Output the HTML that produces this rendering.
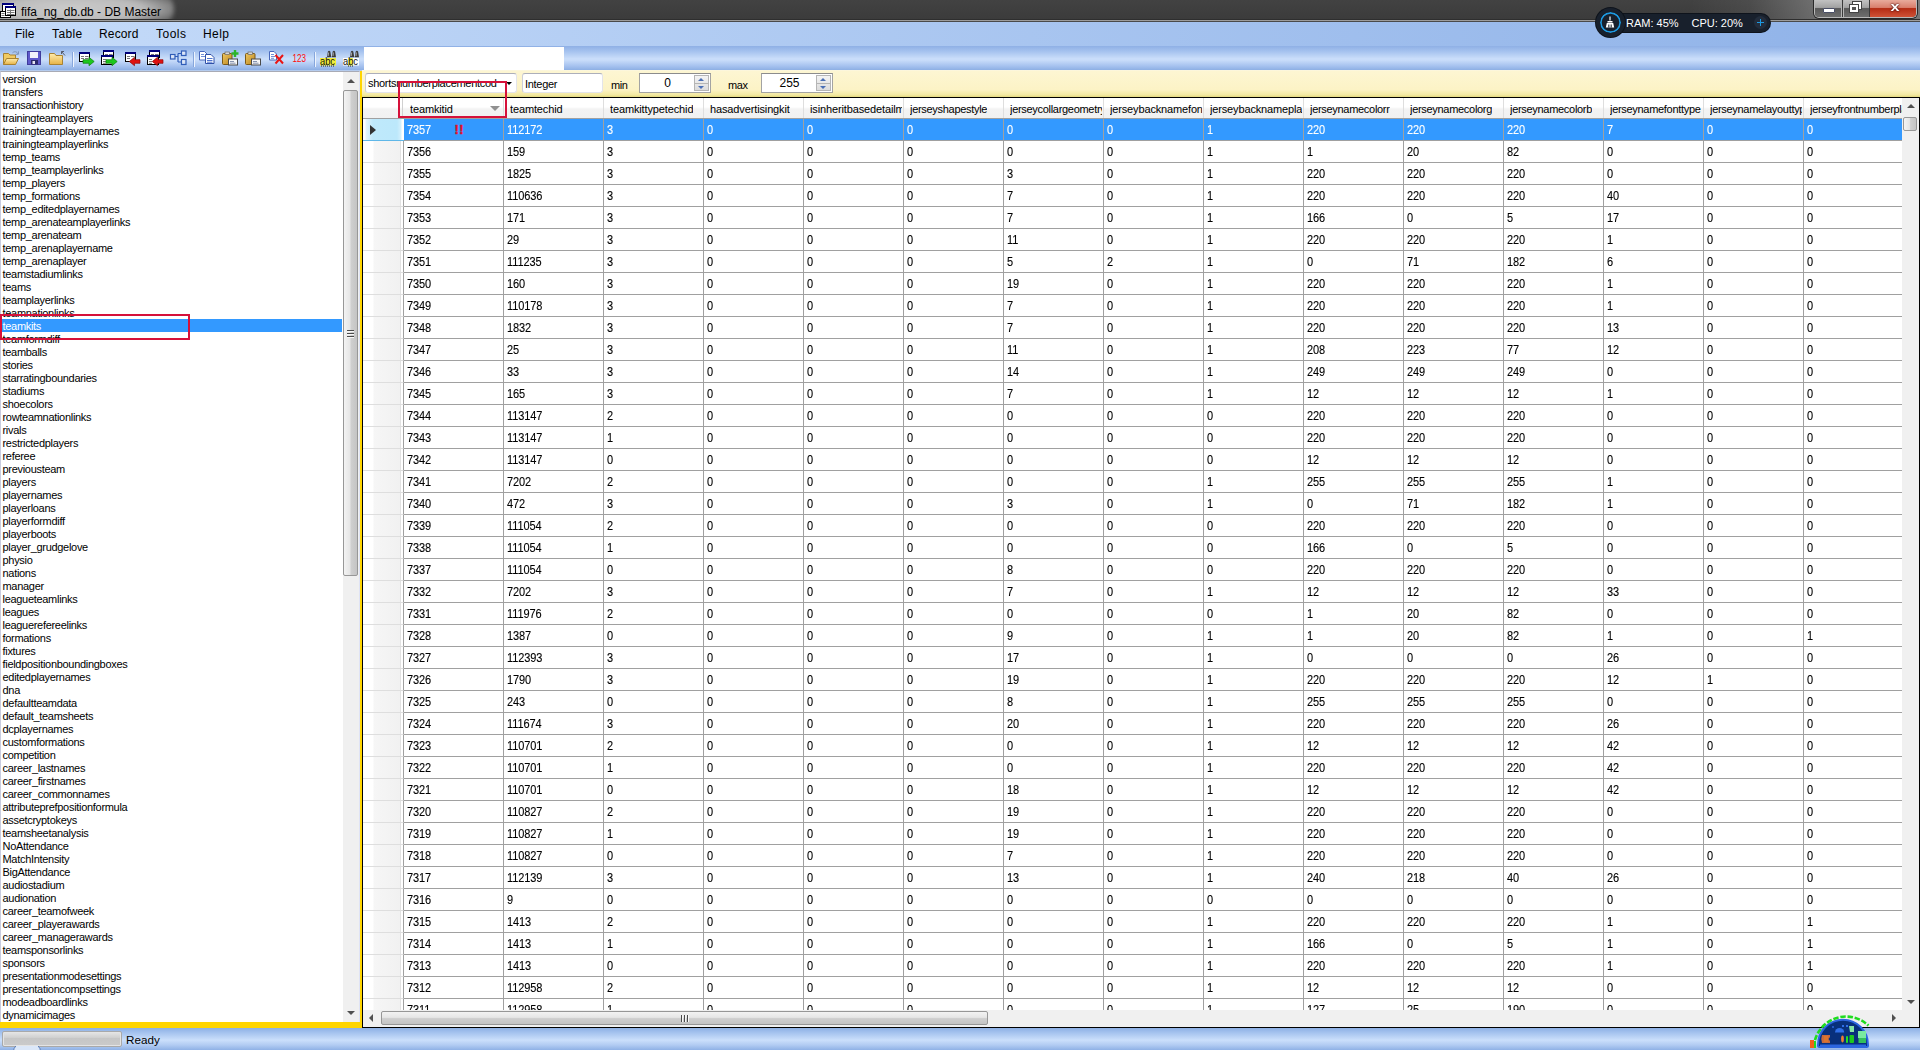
<!DOCTYPE html>
<html lang="en"><head><meta charset="utf-8"><title>fifa_ng_db.db - DB Master</title>
<style>
html,body{margin:0;padding:0}
body{width:1920px;height:1050px;overflow:hidden;position:relative;background:#c3d9f7;font-family:"Liberation Sans",sans-serif;font-size:11px;color:#000}
div,span,i,b,svg{position:absolute;box-sizing:border-box}
i,b{display:block;font-style:normal;font-weight:normal}
/* title */
#title{left:0;top:0;width:1920px;height:20px;background:linear-gradient(90deg,rgba(255,255,255,0) 1690px,rgba(255,255,255,.06) 1750px,rgba(255,255,255,.24) 1814px,rgba(255,255,255,.3) 1920px),linear-gradient(#424242,#3b3b3b)}
#glow{left:-34px;top:-9px;width:208px;height:36px;border-radius:18px;background:radial-gradient(ellipse at center,rgba(212,212,212,.95) 0%,rgba(200,200,200,.9) 50%,rgba(150,150,150,.5) 78%,rgba(60,60,60,0) 100%);filter:blur(2px)}
#appicon{left:0;top:2px}
#ttext{left:21px;top:3.500px;font-size:12px;line-height:16px;white-space:nowrap;color:#000}
#tline1{left:0;top:19px;width:1920px;height:1px;background:#2e2e2e}
#tline2{left:0;top:20px;width:1920px;height:1px;background:#9c9c9c}
#tline3{left:0;top:21px;width:1920px;height:1px;background:#4a4a4a}
#winbtns{left:1814px;top:-1px;width:103px;height:19px;border:1px solid #b9b9b9;border-top:none;border-radius:0 0 5px 5px;background:#555;overflow:hidden;box-shadow:0 0 0 1px #2a2a2a}
.wb{top:0;height:18px}
.wb.min{left:0;width:28px;background:linear-gradient(#c6c6c6 0,#a2a2a2 47%,#5a5a5a 53%,#6e6e6e 100%);border-right:1px solid #3a3a3a;box-shadow:inset -1px 0 0 #b5b5b5}
.wb.min i{left:8px;top:9px;width:12px;height:5px;background:#fff;border:1px solid #4a4f66;border-radius:1px}
.wb.max{left:28px;width:27px;background:linear-gradient(#c6c6c6 0,#a2a2a2 47%,#5a5a5a 53%,#6e6e6e 100%);border-right:1px solid #3a3a3a;box-shadow:inset 1px 0 0 #b5b5b5}
.wb.max i{left:10px;top:3px;width:8px;height:7px;border:2px solid #fff;outline:1px solid #444}
.wb.max b{left:7px;top:6px;width:8px;height:7px;border:2px solid #fff;background:#555;outline:1px solid #444}
.wb.cls{left:55px;width:46px;background:linear-gradient(#eab0a2 0,#d97f6d 47%,#b42c14 53%,#cf5236 100%)}
.wb.cls span{left:0;top:-1px;width:46px;text-align:center;font-weight:bold;font-size:12px;line-height:18px;color:#fff;text-shadow:0 0 2px #400,0 0 1px #400;transform:scaleX(1.35);margin-left:2px}
/* menu */
#menu{left:0;top:22px;width:1920px;height:24px;background:linear-gradient(90deg,#c5dbf9 0,#8fb2e8 100%)}
#menu span{top:5px;font-size:12px;line-height:15px;white-space:nowrap;color:#000;margin-left:-1px}
/* toolbar */
#toolbar{left:0;top:46px;width:1920px;height:25px;background:linear-gradient(#8fb0e5 0,#a6c3ef 22%,#c9ddfa 50%,#c9ddfa 56%,#a6c2ef 80%,#8dafe4 96%,#dbe7f8 100%)}
#tbsvg{left:0;top:0}
#toolbar .sep{top:4px;width:1px;height:15px;background:#6a8ccb;box-shadow:1px 1px 0 #fff}
#tbwhite{left:364px;top:1px;width:200px;height:23px;background:#fff}
/* widget */
#widget{left:1590px;top:5px;width:185px;height:36px}
#wpill{left:8px;top:8.500px;width:172px;height:18px;border-radius:10px;background:#18202c;box-shadow:0 0 0 1px #0e131b}
#wcirc{left:6px;top:2.500px;width:29px;height:29px;border-radius:50%;background:#18202c;border:4px solid #18202c;box-shadow:inset 0 0 0 1.700px #1d9ae2,0 0 0 1px #0e131b}
#wbroom{left:14px;top:11px}
#wram,#wcpu{top:11px;font-size:11px;line-height:15px;color:#fff;white-space:nowrap}
#wram{left:36px}#wcpu{left:101.500px}
#wplus{left:164px;top:11px;width:13px;height:13px;border-radius:50%;background:#232d3c}
#wplus i{left:3px;top:6px;width:7px;height:1px;background:#1d9ae2}
#wplus b{left:6px;top:3px;width:1px;height:7px;background:#1d9ae2}
/* list */
#list{left:0;top:71px;width:343px;height:951px;background:#fff;border-left:1px solid #c9cde0;border-top:1px solid #a9abb5;overflow:hidden}
#list div{position:static;height:13px;line-height:15px;overflow:visible;padding-left:1.500px;white-space:nowrap;font-size:11px;letter-spacing:-.3px;margin-top:0}
#list div:first-child{margin-top:0}
#list div.sel{background:#3399ff;color:#fff;width:341px}
#lsb{left:343px;top:71px;width:17px;height:951px;background:#f0f0f0;border-top:1px solid #a9abb5;border-right:1px solid #dfe3f5}
.arr{width:0;height:0}
#lsb .up{left:4px;top:7px;border:4px solid transparent;border-top:none;border-bottom:4px solid #505050}
#lsb .dn{left:4px;bottom:7px;border:4px solid transparent;border-bottom:none;border-top:4px solid #505050}
#lsb .thumb{left:0;top:18px;width:15px;height:486px;border:1px solid #979797;border-radius:2px;background:linear-gradient(90deg,#f3f3f3 0,#e6e6e6 45%,#cfcfcf 55%,#c4c4c4 100%)}
#lsb .thumb i{left:3px;top:239px;width:7px;height:8px;background:repeating-linear-gradient(#4a4a4a 0,#4a4a4a 1px,#f8f8f8 1px,#f8f8f8 2px,transparent 2px,transparent 3px)}
#gold-v{left:360px;top:71px;width:2px;height:957px;background:#ffd500}
#gold-h{left:0;top:1022px;width:362px;height:6px;background:#ffd500}
/* filter panel */
#fpanel{left:362px;top:70px;width:1558px;height:27px;background:linear-gradient(#fbf7e6 0,#fdf6d2 1px,#fdf6d2 2px,#fcf3c6 72%,#f3e9a2 92%,#e3d97e 100%)}
.box{top:3px;height:20px;background:#fff;border:1px solid #e3e4ea;border-top-color:#adafba;border-left-color:#cdcfd8;border-radius:3px;overflow:hidden}
.box span{left:2px;top:4px;font-size:11px;line-height:13px;white-space:nowrap;letter-spacing:-.3px}
#combo{left:3px;width:152px}#combo span{top:3px}
#combo .dd{left:140px;top:8px;width:0;height:0;border:3px solid transparent;border-bottom:none;border-top:3px solid #000}
#itype{left:160px;width:81px}
.lbl{top:9px;font-size:11px;line-height:13px;letter-spacing:-.4px;margin-left:-2px}
.num{width:72px;border:1px solid #a3a3a3;border-top-color:#8c8c8c;border-radius:0}
#nmin{left:277px}#nmax{left:399px}
.num span{left:0;width:55px;text-align:center;top:3px;font-size:12px;letter-spacing:0}
.spin{right:1px;top:1px;width:15px;height:16px;border:1px solid #b5b5b5;background:linear-gradient(#f4f4f4,#dcdcdc)}
.spin::after{content:"";position:absolute;left:0;top:7px;width:13px;height:1px;background:#b5b5b5}
.spin .u{left:3px;top:2px;width:0;height:0;border:3px solid transparent;border-top:none;border-bottom:3px solid #4a6fb5}
.spin .d{left:3px;top:10px;width:0;height:0;border:3px solid transparent;border-bottom:none;border-top:3px solid #4a6fb5}
/* grid */
#grid{left:362px;top:97px;width:1558px;height:931px;border:1px solid #000;background:#fff;overflow:hidden}
#ghead{left:0;top:0;width:1541px;height:21px;background:linear-gradient(#fff 0,#fff 45%,#f3f3f3 55%,#f1f1f1 100%);border-bottom:1px solid #a0a0a0}
#ghead .rh0{left:0;top:0;width:40px;height:20px;border-right:1px solid #d0d0d0}
.hc{top:0;width:100px;height:20px;overflow:hidden;border-right:1px solid #dedede}
.hc span{left:6px;top:5px;line-height:13px;white-space:nowrap;letter-spacing:-.13px;max-width:92px;overflow:hidden}
.hc .sort{left:86px;top:8px;width:0;height:0;border:5px solid transparent;border-bottom:none;border-top:5px solid #909090}
#gbody{left:0;top:21px;width:1541px;height:891px;overflow:hidden}
.row{left:0;width:1541px;height:22px;border-bottom:1px solid #a0a0a0}
.rh{left:0;top:0;width:41px;height:22px;background:linear-gradient(90deg,#fff 0,#fff 10px,#f6f6f6 11px,#f1f1f1 37px,#e2e2e2 37px,#e2e2e2 38px,#fff 38px,#fff 40px);border-right:1px solid #a0a0a0;border-bottom:1px solid #dedede}
.c{top:0;width:100px;height:21px;border-right:1px solid #a0a0a0;padding:5px 0 0 3px;line-height:13px;white-space:nowrap;overflow:hidden;letter-spacing:-.1px}
.c span{position:static;display:inline-block;transform:scaleY(1.125);transform-origin:0 11px;-webkit-text-stroke:.1px currentColor}
.row.sel .c{background:#3399ff;color:#fff}
.row.sel .rh{background:linear-gradient(90deg,#fff 0,#fff 2px,#e4f5fd 3px,#bfe9fb 10px,#bce8fb 34px,#d5f0fc 38px,#fff 39px,#fff 41px);border-bottom:1px solid #5fb7e8;border-right:none}
.cur{left:7px;top:6px;width:0;height:0;border:5px solid transparent;border-right:none;border-left:6px solid #333}
.err{left:50.500px;top:4px;color:#e3122b;font-weight:bold;font-size:13px;line-height:13px;letter-spacing:.3px;-webkit-text-stroke:.5px #e3122b}
#gvsb{left:1539px;top:0;width:17px;height:912px;background:#f0f0f0}
#gvsb .up{left:5px;top:6px;border:4px solid transparent;border-top:none;border-bottom:4px solid #505050}
#gvsb .dn{left:5px;bottom:6px;border:4px solid transparent;border-bottom:none;border-top:4px solid #505050}
#gvsb .thumb{left:1px;top:19px;width:14px;height:14px;border:1px solid #979797;border-radius:2px;background:linear-gradient(90deg,#f3f3f3 0,#e6e6e6 45%,#cfcfcf 55%,#c4c4c4 100%)}
#ghsb{left:0;top:912px;width:1540px;height:17px;background:#f0f0f0}
#ghsb .lf{left:6px;top:4px;border:4px solid transparent;border-left:none;border-right:4px solid #505050}
#ghsb .rt{right:7px;top:4px;border:4px solid transparent;border-right:none;border-left:4px solid #505050}
#ghsb .thumb{left:18px;top:1px;width:607px;height:14px;border:1px solid #979797;border-radius:2px;background:linear-gradient(#f3f3f3 0,#e6e6e6 45%,#cfcfcf 55%,#c4c4c4 100%)}
#ghsb .thumb i{left:299px;top:3px;width:8px;height:7px;background:repeating-linear-gradient(90deg,#4a4a4a 0,#4a4a4a 1px,#f8f8f8 1px,#f8f8f8 2px,transparent 2px,transparent 3px)}
#gcorner{left:1540px;top:912px;width:16px;height:17px;background:#f0f0f0}
.anno{border:2px solid #d6113a;z-index:20}
/* status */
#status{left:0;top:1028px;width:1920px;height:22px;background:linear-gradient(#8db0e5 0,#a9c6f0 25%,#cbdffb 55%,#b1cbf2 78%,#8fb1e6 100%)}
#prog{left:2px;top:3px;width:120px;height:16px;border:1px solid #a9a9a9;border-radius:2px;background:linear-gradient(#e6e6e6,#d0d0d0 40%,#c6c6c6 45%,#cacaca);box-shadow:inset 0 0 0 1px #e4e4e4}
#status span{left:126px;top:4px;font-size:11.700px;line-height:15px}
#orb{left:12px;top:18px}
#gadget{left:1808px;top:1012px;z-index:30}

</style></head>
<body>
<div id="title"><div id="glow"></div><svg id="appicon" width="18" height="18" viewBox="0 0 18 18"><rect x="2.500" y="1.500" width="11" height="9" fill="#fff" stroke="#000"/><rect x="2" y="1" width="12" height="2" fill="#00007b"/><rect x="0.500" y="9.500" width="10" height="6" fill="#fff" stroke="#000"/><path d="M1.500 11.500h3M1.500 13.500h3" stroke="#777"/><rect x="5.500" y="4.500" width="10" height="9" fill="#fff" stroke="#000"/><rect x="5" y="4" width="11" height="2" fill="#00007b"/><path d="M7 8.500h7.500M7 10.500h7.500M7 12.500h7.500M10.500 7.500v5.500" stroke="#777" fill="none"/></svg><span id="ttext">fifa_ng_db.db - DB Master</span><div id="winbtns"><div class="wb min"><i></i></div><div class="wb max"><i></i><b></b></div><div class="wb cls"><span>x</span></div></div></div>
<div id="tline1"></div><div id="tline2"></div><div id="tline3"></div>
<div id="menu"><span style="left:16px;letter-spacing:0px">File</span><span style="left:53px;letter-spacing:0.4px">Table</span><span style="left:100px;letter-spacing:0.15px">Record</span><span style="left:157px;letter-spacing:0.5px">Tools</span><span style="left:204px;letter-spacing:0.4px">Help</span></div>
<div id="toolbar"><svg id="tbsvg" width="364" height="25" viewBox="0 46 364 25">
<defs>
<linearGradient id="gf" x1="0" y1="0" x2="0" y2="1"><stop offset="0" stop-color="#ffedae"/><stop offset="1" stop-color="#e6b245"/></linearGradient>
<linearGradient id="gw" x1="0" y1="0" x2="1" y2="1"><stop offset="0" stop-color="#fff"/><stop offset="1" stop-color="#b9cdf0"/></linearGradient>
<linearGradient id="gc" x1="0" y1="0" x2="1" y2="1"><stop offset="0" stop-color="#f0c860"/><stop offset="1" stop-color="#b98420"/></linearGradient>
</defs>
<!-- open -->
<path d="M3.500 64.500V53.500H8.500L10 55H15.500V58" fill="#f1cb63" stroke="#a98232"/>
<path d="M3.500 64.500L6.500 58.500H18.500L15.500 64.500Z" fill="url(#gf)" stroke="#a98232"/>
<path d="M12.500 52.800C14.500 51 17 51.500 18 54M18.400 51.300V54.300H15.500" fill="none" stroke="#7d93b8"/>
<!-- save -->
<rect x="27.500" y="51.500" width="13" height="13" fill="#5e59cb" stroke="#3f3b9c"/>
<rect x="30" y="52" width="8" height="6" fill="#f2f3fb"/>
<rect x="31" y="60" width="7" height="4.500" fill="#2c2a6c"/>
<rect x="32.500" y="61" width="2.500" height="3" fill="#e4e4f0"/>
<!-- folder up -->
<path d="M49.500 64.500V53.500H54.500L56 55.500H62.500V64.500Z" fill="url(#gf)" stroke="#a98232"/>
<path d="M61.500 51.500L65 55.500M61.500 54V51.500H64" fill="none" stroke="#555a6a"/>
<path d="M72.500 52V67" stroke="#86a6dc"/><path d="M73.500 52V67" stroke="#eef4fd"/>
<!-- export one -->
<rect x="79.500" y="52.500" width="10" height="9" fill="#fff" stroke="#000"/><rect x="79" y="52" width="11" height="2" fill="#00007b"/>
<path d="M81 56.500h3M85 56.500h3.500M81 58.500h3M85 58.500h3.500" stroke="#777"/>
<path d="M83 59.700H89V57.300L94.200 61.500L89 65.700V63.300H83Z" fill="#1cc81c" stroke="#0c7c0c" stroke-width=".7"/>
<!-- export all -->
<rect x="103.500" y="50.500" width="10" height="7" fill="#fff" stroke="#000"/><rect x="103" y="50" width="11" height="2" fill="#00007b"/>
<path d="M105 54.500h3M109 54.500h3.500" stroke="#777"/>
<rect x="101.500" y="55.500" width="11" height="9" fill="#fff" stroke="#000"/><rect x="101" y="55" width="12" height="2" fill="#00007b"/>
<path d="M103 59.500h3M103 61.500h3M103 63.300h3" stroke="#777"/>
<path d="M106 59.700H112V57.300L117.200 61.500L112 65.700V63.300H106Z" fill="#1cc81c" stroke="#0c7c0c" stroke-width=".7"/>
<!-- import one -->
<rect x="125.500" y="52.500" width="10" height="9" fill="#fff" stroke="#000"/><rect x="125" y="52" width="11" height="2" fill="#00007b"/>
<path d="M127 56.500h3M131 56.500h3.500M127 58.500h3" stroke="#777"/>
<path d="M140 59.700H134.500V57.300L129.300 61.500L134.500 65.700V63.300H140Z" fill="#e01212" stroke="#8c0808" stroke-width=".7"/>
<!-- import all -->
<rect x="149.500" y="50.500" width="10" height="7" fill="#fff" stroke="#000"/><rect x="149" y="50" width="11" height="2" fill="#00007b"/>
<path d="M151 54.500h3M155 54.500h3.500" stroke="#777"/>
<rect x="147.500" y="55.500" width="11" height="9" fill="#fff" stroke="#000"/><rect x="147" y="55" width="12" height="2" fill="#00007b"/>
<path d="M149 59.500h3M149 61.500h3M149 63.300h3" stroke="#777"/>
<path d="M163 59.700H157.500V57.300L152.300 61.500L157.500 65.700V63.300H163Z" fill="#e01212" stroke="#8c0808" stroke-width=".7"/>
<!-- tree -->
<path d="M175 56.500H178M178 53.500V62M178 53.500H181M178 62H181" fill="none" stroke="#2f5cb8" stroke-width="1.200"/>
<rect x="170.500" y="54.500" width="4.500" height="4.500" fill="url(#gw)" stroke="#2f5cb8" stroke-width="1.200"/>
<rect x="181.500" y="51" width="4.500" height="4.500" fill="url(#gw)" stroke="#2f5cb8" stroke-width="1.200"/>
<rect x="181.500" y="59.500" width="4.500" height="5" fill="url(#gw)" stroke="#2f5cb8" stroke-width="1.200"/>
<path d="M193.500 52V67" stroke="#86a6dc"/><path d="M194.500 52V67" stroke="#eef4fd"/>
<!-- copy -->
<path d="M199.500 51.500h5l2.500 2.500v6h-7.500z" fill="#fff" stroke="#4868bc"/><path d="M201 54.500h3M201 56.500h4.500" stroke="#6f8fd8"/>
<path d="M205.500 54.500h5.500l3 3v6h-8.500z" fill="#fff" stroke="#2f50a8"/><path d="M207 58.500h5.500M207 60.500h5.500M207 62.200h5.500" stroke="#4f74cf"/>
<!-- paste new -->
<rect x="222.500" y="53.500" width="9.500" height="11" rx="1" fill="url(#gc)" stroke="#7c5a18"/>
<rect x="225" y="52" width="4.500" height="2.500" fill="#d8d8d8" stroke="#666" stroke-width=".7"/>
<rect x="228.500" y="59" width="9" height="6" fill="#f6f6f6" stroke="#4a4a4a"/><path d="M230 61.500h4M230 63.200h5.500" stroke="#8894b0"/>
<path d="M235 50V57M231.500 53.500H238.500" stroke="#2cb52c" stroke-width="2.400"/>
<!-- paste -->
<rect x="245.500" y="53.500" width="9.500" height="11" rx="1" fill="url(#gc)" stroke="#7c5a18"/>
<rect x="248" y="52" width="4.500" height="2.500" fill="#d8d8d8" stroke="#666" stroke-width=".7"/>
<rect x="251.500" y="59" width="9" height="6" fill="#f6f6f6" stroke="#4a4a4a"/><path d="M253 61.500h4M253 63.200h5.500" stroke="#8894b0"/>
<!-- delete -->
<path d="M269.500 51.500h4.500l2.500 2.500v6h-7z" fill="#fff" stroke="#4868bc"/><path d="M271 54.500h3M271 56.500h4M271 58.300h3" stroke="#6f8fd8"/>
<path d="M275.500 55L283 63.500M283 55L275.500 63.500" stroke="#ea1414" stroke-width="2"/>
<!-- 123 -->
<text x="292.500" y="62" font-family="Liberation Sans, sans-serif" font-size="11.500" fill="#ff0a0a" textLength="13.500" lengthAdjust="spacingAndGlyphs">123</text>
<path d="M314.500 52V67" stroke="#86a6dc"/><path d="M315.500 52V67" stroke="#eef4fd"/>
<!-- find -->
<rect x="320" y="58" width="16" height="7.500" fill="#f2ee3c"/>
<text x="320" y="64.500" font-family="Liberation Sans, sans-serif" font-size="10.500" fill="#111" textLength="15" lengthAdjust="spacingAndGlyphs">abc</text>
<path d="M321 66h14" stroke="#222" stroke-dasharray="1 1"/>
<path d="M327 57.300L327.900 51.500Q329.100 49.800 330.300 51.500L331.300 57.300ZM331.700 57.300L332.700 51.500Q333.900 49.800 335.100 51.500L336 57.300Z" fill="#3c3c3c"/><path d="M328.600 52.500L328.200 56M333.400 52.500L333 56" stroke="#b4b4b4" stroke-width=".9"/>
<!-- find2 -->
<rect x="343" y="58" width="16" height="7.500" fill="#fff"/><rect x="348" y="58" width="4.800" height="7.500" fill="#f2ee3c"/>
<text x="343" y="64.500" font-family="Liberation Sans, sans-serif" font-size="10.500" fill="#111" textLength="15" lengthAdjust="spacingAndGlyphs">abc</text>
<path d="M348 66h5" stroke="#222" stroke-dasharray="1 1"/>
<path d="M350 57.300L350.900 51.500Q352.100 49.800 353.300 51.500L354.300 57.300ZM354.700 57.300L355.700 51.500Q356.900 49.800 358.100 51.500L359 57.300Z" fill="#3c3c3c"/><path d="M351.600 52.500L351.200 56M356.400 52.500L356 56" stroke="#b4b4b4" stroke-width=".9"/>
</svg>
<div id="tbwhite"></div></div>
<div id="widget"><div id="wpill"></div><div id="wcirc"></div><svg id="wbroom" width="12" height="12" viewBox="0 0 12 12"><path d="M6 0.500v4" stroke="#fff" stroke-width="1.200"/><path d="M3.500 5h5v1.500h-5z" fill="#fff"/><path d="M2.800 7h6.400l1 4.500h-8.400z" fill="#fff"/><path d="M4.500 8.500v3M6 8.500v3M7.500 8.500v3" stroke="#16202c" stroke-width="0.700"/></svg><span id="wram">RAM: 45%</span><span id="wcpu">CPU: 20%</span><div id="wplus"><i></i><b></b></div></div>
<div id="list"><div>version</div><div>transfers</div><div>transactionhistory</div><div>trainingteamplayers</div><div>trainingteamplayernames</div><div>trainingteamplayerlinks</div><div>temp_teams</div><div>temp_teamplayerlinks</div><div>temp_players</div><div>temp_formations</div><div>temp_editedplayernames</div><div>temp_arenateamplayerlinks</div><div>temp_arenateam</div><div>temp_arenaplayername</div><div>temp_arenaplayer</div><div>teamstadiumlinks</div><div>teams</div><div>teamplayerlinks</div><div>teamnationlinks</div><div class="sel">teamkits</div><div>teamformdiff</div><div>teamballs</div><div>stories</div><div>starratingboundaries</div><div>stadiums</div><div>shoecolors</div><div>rowteamnationlinks</div><div>rivals</div><div>restrictedplayers</div><div>referee</div><div>previousteam</div><div>players</div><div>playernames</div><div>playerloans</div><div>playerformdiff</div><div>playerboots</div><div>player_grudgelove</div><div>physio</div><div>nations</div><div>manager</div><div>leagueteamlinks</div><div>leagues</div><div>leaguerefereelinks</div><div>formations</div><div>fixtures</div><div>fieldpositionboundingboxes</div><div>editedplayernames</div><div>dna</div><div>defaultteamdata</div><div>default_teamsheets</div><div>dcplayernames</div><div>customformations</div><div>competition</div><div>career_lastnames</div><div>career_firstnames</div><div>career_commonnames</div><div>attributeprefpositionformula</div><div>assetcryptokeys</div><div>teamsheetanalysis</div><div>NoAttendance</div><div>MatchIntensity</div><div>BigAttendance</div><div>audiostadium</div><div>audionation</div><div>career_teamofweek</div><div>career_playerawards</div><div>career_managerawards</div><div>teamsponsorlinks</div><div>sponsors</div><div>presentationmodesettings</div><div>presentationcompsettings</div><div>modeadboardlinks</div><div>dynamicimages</div></div>
<div id="lsb"><div class="arr up"></div><div class="thumb"><i></i></div><div class="arr dn"></div></div>
<div id="gold-v"></div><div id="gold-h"></div>
<div id="fpanel"><div class="box" id="combo"><span>shortsnumberplacementcod</span><i class="dd"></i></div><div class="box" id="itype"><span>Integer</span></div><span class="lbl" style="left:251px">min</span><div class="box num" id="nmin"><span>0</span><div class="spin"><i class="u"></i><i class="d"></i></div></div><span class="lbl" style="left:368px">max</span><div class="box num" id="nmax"><span>255</span><div class="spin"><i class="u"></i><i class="d"></i></div></div></div>
<div id="grid"><div id="ghead"><div class="rh0"></div><div class="hc" style="left:41px"><span>teamkitid</span><i class="sort"></i></div><div class="hc" style="left:141px"><span>teamtechid</span></div><div class="hc" style="left:241px"><span>teamkittypetechid</span></div><div class="hc" style="left:341px"><span>hasadvertisingkit</span></div><div class="hc" style="left:441px"><span>isinheritbasedetailmap</span></div><div class="hc" style="left:541px"><span style="letter-spacing:-.3px">jerseyshapestyle</span></div><div class="hc" style="left:641px"><span style="letter-spacing:-.3px">jerseycollargeometrytype</span></div><div class="hc" style="left:741px"><span style="letter-spacing:-.15px">jerseybacknamefontcase</span></div><div class="hc" style="left:841px"><span style="letter-spacing:-.15px">jerseybacknameplacementcode</span></div><div class="hc" style="left:941px"><span style="letter-spacing:-.3px">jerseynamecolorr</span></div><div class="hc" style="left:1041px"><span style="letter-spacing:-.3px">jerseynamecolorg</span></div><div class="hc" style="left:1141px"><span style="letter-spacing:-.3px">jerseynamecolorb</span></div><div class="hc" style="left:1241px"><span style="letter-spacing:-.3px">jerseynamefonttype</span></div><div class="hc" style="left:1341px"><span style="letter-spacing:-.3px">jerseynamelayouttype</span></div><div class="hc" style="left:1441px"><span style="letter-spacing:-.3px">jerseyfrontnumberplacementcode</span></div></div><div id="gbody"><div class="row sel" style="top:0px"><div class="rh"><i class="cur"></i></div><div class="c" style="left:41px"><span>7357</span><b class="err">!!</b></div><div class="c" style="left:141px"><span>112172</span></div><div class="c" style="left:241px"><span>3</span></div><div class="c" style="left:341px"><span>0</span></div><div class="c" style="left:441px"><span>0</span></div><div class="c" style="left:541px"><span>0</span></div><div class="c" style="left:641px"><span>0</span></div><div class="c" style="left:741px"><span>0</span></div><div class="c" style="left:841px"><span>1</span></div><div class="c" style="left:941px"><span>220</span></div><div class="c" style="left:1041px"><span>220</span></div><div class="c" style="left:1141px"><span>220</span></div><div class="c" style="left:1241px"><span>7</span></div><div class="c" style="left:1341px"><span>0</span></div><div class="c" style="left:1441px"><span>0</span></div></div><div class="row" style="top:22px"><div class="rh"></div><div class="c" style="left:41px"><span>7356</span></div><div class="c" style="left:141px"><span>159</span></div><div class="c" style="left:241px"><span>3</span></div><div class="c" style="left:341px"><span>0</span></div><div class="c" style="left:441px"><span>0</span></div><div class="c" style="left:541px"><span>0</span></div><div class="c" style="left:641px"><span>0</span></div><div class="c" style="left:741px"><span>0</span></div><div class="c" style="left:841px"><span>1</span></div><div class="c" style="left:941px"><span>1</span></div><div class="c" style="left:1041px"><span>20</span></div><div class="c" style="left:1141px"><span>82</span></div><div class="c" style="left:1241px"><span>0</span></div><div class="c" style="left:1341px"><span>0</span></div><div class="c" style="left:1441px"><span>0</span></div></div><div class="row" style="top:44px"><div class="rh"></div><div class="c" style="left:41px"><span>7355</span></div><div class="c" style="left:141px"><span>1825</span></div><div class="c" style="left:241px"><span>3</span></div><div class="c" style="left:341px"><span>0</span></div><div class="c" style="left:441px"><span>0</span></div><div class="c" style="left:541px"><span>0</span></div><div class="c" style="left:641px"><span>3</span></div><div class="c" style="left:741px"><span>0</span></div><div class="c" style="left:841px"><span>1</span></div><div class="c" style="left:941px"><span>220</span></div><div class="c" style="left:1041px"><span>220</span></div><div class="c" style="left:1141px"><span>220</span></div><div class="c" style="left:1241px"><span>0</span></div><div class="c" style="left:1341px"><span>0</span></div><div class="c" style="left:1441px"><span>0</span></div></div><div class="row" style="top:66px"><div class="rh"></div><div class="c" style="left:41px"><span>7354</span></div><div class="c" style="left:141px"><span>110636</span></div><div class="c" style="left:241px"><span>3</span></div><div class="c" style="left:341px"><span>0</span></div><div class="c" style="left:441px"><span>0</span></div><div class="c" style="left:541px"><span>0</span></div><div class="c" style="left:641px"><span>7</span></div><div class="c" style="left:741px"><span>0</span></div><div class="c" style="left:841px"><span>1</span></div><div class="c" style="left:941px"><span>220</span></div><div class="c" style="left:1041px"><span>220</span></div><div class="c" style="left:1141px"><span>220</span></div><div class="c" style="left:1241px"><span>40</span></div><div class="c" style="left:1341px"><span>0</span></div><div class="c" style="left:1441px"><span>0</span></div></div><div class="row" style="top:88px"><div class="rh"></div><div class="c" style="left:41px"><span>7353</span></div><div class="c" style="left:141px"><span>171</span></div><div class="c" style="left:241px"><span>3</span></div><div class="c" style="left:341px"><span>0</span></div><div class="c" style="left:441px"><span>0</span></div><div class="c" style="left:541px"><span>0</span></div><div class="c" style="left:641px"><span>7</span></div><div class="c" style="left:741px"><span>0</span></div><div class="c" style="left:841px"><span>1</span></div><div class="c" style="left:941px"><span>166</span></div><div class="c" style="left:1041px"><span>0</span></div><div class="c" style="left:1141px"><span>5</span></div><div class="c" style="left:1241px"><span>17</span></div><div class="c" style="left:1341px"><span>0</span></div><div class="c" style="left:1441px"><span>0</span></div></div><div class="row" style="top:110px"><div class="rh"></div><div class="c" style="left:41px"><span>7352</span></div><div class="c" style="left:141px"><span>29</span></div><div class="c" style="left:241px"><span>3</span></div><div class="c" style="left:341px"><span>0</span></div><div class="c" style="left:441px"><span>0</span></div><div class="c" style="left:541px"><span>0</span></div><div class="c" style="left:641px"><span>11</span></div><div class="c" style="left:741px"><span>0</span></div><div class="c" style="left:841px"><span>1</span></div><div class="c" style="left:941px"><span>220</span></div><div class="c" style="left:1041px"><span>220</span></div><div class="c" style="left:1141px"><span>220</span></div><div class="c" style="left:1241px"><span>1</span></div><div class="c" style="left:1341px"><span>0</span></div><div class="c" style="left:1441px"><span>0</span></div></div><div class="row" style="top:132px"><div class="rh"></div><div class="c" style="left:41px"><span>7351</span></div><div class="c" style="left:141px"><span>111235</span></div><div class="c" style="left:241px"><span>3</span></div><div class="c" style="left:341px"><span>0</span></div><div class="c" style="left:441px"><span>0</span></div><div class="c" style="left:541px"><span>0</span></div><div class="c" style="left:641px"><span>5</span></div><div class="c" style="left:741px"><span>2</span></div><div class="c" style="left:841px"><span>1</span></div><div class="c" style="left:941px"><span>0</span></div><div class="c" style="left:1041px"><span>71</span></div><div class="c" style="left:1141px"><span>182</span></div><div class="c" style="left:1241px"><span>6</span></div><div class="c" style="left:1341px"><span>0</span></div><div class="c" style="left:1441px"><span>0</span></div></div><div class="row" style="top:154px"><div class="rh"></div><div class="c" style="left:41px"><span>7350</span></div><div class="c" style="left:141px"><span>160</span></div><div class="c" style="left:241px"><span>3</span></div><div class="c" style="left:341px"><span>0</span></div><div class="c" style="left:441px"><span>0</span></div><div class="c" style="left:541px"><span>0</span></div><div class="c" style="left:641px"><span>19</span></div><div class="c" style="left:741px"><span>0</span></div><div class="c" style="left:841px"><span>1</span></div><div class="c" style="left:941px"><span>220</span></div><div class="c" style="left:1041px"><span>220</span></div><div class="c" style="left:1141px"><span>220</span></div><div class="c" style="left:1241px"><span>1</span></div><div class="c" style="left:1341px"><span>0</span></div><div class="c" style="left:1441px"><span>0</span></div></div><div class="row" style="top:176px"><div class="rh"></div><div class="c" style="left:41px"><span>7349</span></div><div class="c" style="left:141px"><span>110178</span></div><div class="c" style="left:241px"><span>3</span></div><div class="c" style="left:341px"><span>0</span></div><div class="c" style="left:441px"><span>0</span></div><div class="c" style="left:541px"><span>0</span></div><div class="c" style="left:641px"><span>7</span></div><div class="c" style="left:741px"><span>0</span></div><div class="c" style="left:841px"><span>1</span></div><div class="c" style="left:941px"><span>220</span></div><div class="c" style="left:1041px"><span>220</span></div><div class="c" style="left:1141px"><span>220</span></div><div class="c" style="left:1241px"><span>1</span></div><div class="c" style="left:1341px"><span>0</span></div><div class="c" style="left:1441px"><span>0</span></div></div><div class="row" style="top:198px"><div class="rh"></div><div class="c" style="left:41px"><span>7348</span></div><div class="c" style="left:141px"><span>1832</span></div><div class="c" style="left:241px"><span>3</span></div><div class="c" style="left:341px"><span>0</span></div><div class="c" style="left:441px"><span>0</span></div><div class="c" style="left:541px"><span>0</span></div><div class="c" style="left:641px"><span>7</span></div><div class="c" style="left:741px"><span>0</span></div><div class="c" style="left:841px"><span>1</span></div><div class="c" style="left:941px"><span>220</span></div><div class="c" style="left:1041px"><span>220</span></div><div class="c" style="left:1141px"><span>220</span></div><div class="c" style="left:1241px"><span>13</span></div><div class="c" style="left:1341px"><span>0</span></div><div class="c" style="left:1441px"><span>0</span></div></div><div class="row" style="top:220px"><div class="rh"></div><div class="c" style="left:41px"><span>7347</span></div><div class="c" style="left:141px"><span>25</span></div><div class="c" style="left:241px"><span>3</span></div><div class="c" style="left:341px"><span>0</span></div><div class="c" style="left:441px"><span>0</span></div><div class="c" style="left:541px"><span>0</span></div><div class="c" style="left:641px"><span>11</span></div><div class="c" style="left:741px"><span>0</span></div><div class="c" style="left:841px"><span>1</span></div><div class="c" style="left:941px"><span>208</span></div><div class="c" style="left:1041px"><span>223</span></div><div class="c" style="left:1141px"><span>77</span></div><div class="c" style="left:1241px"><span>12</span></div><div class="c" style="left:1341px"><span>0</span></div><div class="c" style="left:1441px"><span>0</span></div></div><div class="row" style="top:242px"><div class="rh"></div><div class="c" style="left:41px"><span>7346</span></div><div class="c" style="left:141px"><span>33</span></div><div class="c" style="left:241px"><span>3</span></div><div class="c" style="left:341px"><span>0</span></div><div class="c" style="left:441px"><span>0</span></div><div class="c" style="left:541px"><span>0</span></div><div class="c" style="left:641px"><span>14</span></div><div class="c" style="left:741px"><span>0</span></div><div class="c" style="left:841px"><span>1</span></div><div class="c" style="left:941px"><span>249</span></div><div class="c" style="left:1041px"><span>249</span></div><div class="c" style="left:1141px"><span>249</span></div><div class="c" style="left:1241px"><span>0</span></div><div class="c" style="left:1341px"><span>0</span></div><div class="c" style="left:1441px"><span>0</span></div></div><div class="row" style="top:264px"><div class="rh"></div><div class="c" style="left:41px"><span>7345</span></div><div class="c" style="left:141px"><span>165</span></div><div class="c" style="left:241px"><span>3</span></div><div class="c" style="left:341px"><span>0</span></div><div class="c" style="left:441px"><span>0</span></div><div class="c" style="left:541px"><span>0</span></div><div class="c" style="left:641px"><span>7</span></div><div class="c" style="left:741px"><span>0</span></div><div class="c" style="left:841px"><span>1</span></div><div class="c" style="left:941px"><span>12</span></div><div class="c" style="left:1041px"><span>12</span></div><div class="c" style="left:1141px"><span>12</span></div><div class="c" style="left:1241px"><span>1</span></div><div class="c" style="left:1341px"><span>0</span></div><div class="c" style="left:1441px"><span>0</span></div></div><div class="row" style="top:286px"><div class="rh"></div><div class="c" style="left:41px"><span>7344</span></div><div class="c" style="left:141px"><span>113147</span></div><div class="c" style="left:241px"><span>2</span></div><div class="c" style="left:341px"><span>0</span></div><div class="c" style="left:441px"><span>0</span></div><div class="c" style="left:541px"><span>0</span></div><div class="c" style="left:641px"><span>0</span></div><div class="c" style="left:741px"><span>0</span></div><div class="c" style="left:841px"><span>0</span></div><div class="c" style="left:941px"><span>220</span></div><div class="c" style="left:1041px"><span>220</span></div><div class="c" style="left:1141px"><span>220</span></div><div class="c" style="left:1241px"><span>0</span></div><div class="c" style="left:1341px"><span>0</span></div><div class="c" style="left:1441px"><span>0</span></div></div><div class="row" style="top:308px"><div class="rh"></div><div class="c" style="left:41px"><span>7343</span></div><div class="c" style="left:141px"><span>113147</span></div><div class="c" style="left:241px"><span>1</span></div><div class="c" style="left:341px"><span>0</span></div><div class="c" style="left:441px"><span>0</span></div><div class="c" style="left:541px"><span>0</span></div><div class="c" style="left:641px"><span>0</span></div><div class="c" style="left:741px"><span>0</span></div><div class="c" style="left:841px"><span>0</span></div><div class="c" style="left:941px"><span>220</span></div><div class="c" style="left:1041px"><span>220</span></div><div class="c" style="left:1141px"><span>220</span></div><div class="c" style="left:1241px"><span>0</span></div><div class="c" style="left:1341px"><span>0</span></div><div class="c" style="left:1441px"><span>0</span></div></div><div class="row" style="top:330px"><div class="rh"></div><div class="c" style="left:41px"><span>7342</span></div><div class="c" style="left:141px"><span>113147</span></div><div class="c" style="left:241px"><span>0</span></div><div class="c" style="left:341px"><span>0</span></div><div class="c" style="left:441px"><span>0</span></div><div class="c" style="left:541px"><span>0</span></div><div class="c" style="left:641px"><span>0</span></div><div class="c" style="left:741px"><span>0</span></div><div class="c" style="left:841px"><span>0</span></div><div class="c" style="left:941px"><span>12</span></div><div class="c" style="left:1041px"><span>12</span></div><div class="c" style="left:1141px"><span>12</span></div><div class="c" style="left:1241px"><span>0</span></div><div class="c" style="left:1341px"><span>0</span></div><div class="c" style="left:1441px"><span>0</span></div></div><div class="row" style="top:352px"><div class="rh"></div><div class="c" style="left:41px"><span>7341</span></div><div class="c" style="left:141px"><span>7202</span></div><div class="c" style="left:241px"><span>2</span></div><div class="c" style="left:341px"><span>0</span></div><div class="c" style="left:441px"><span>0</span></div><div class="c" style="left:541px"><span>0</span></div><div class="c" style="left:641px"><span>0</span></div><div class="c" style="left:741px"><span>0</span></div><div class="c" style="left:841px"><span>1</span></div><div class="c" style="left:941px"><span>255</span></div><div class="c" style="left:1041px"><span>255</span></div><div class="c" style="left:1141px"><span>255</span></div><div class="c" style="left:1241px"><span>1</span></div><div class="c" style="left:1341px"><span>0</span></div><div class="c" style="left:1441px"><span>0</span></div></div><div class="row" style="top:374px"><div class="rh"></div><div class="c" style="left:41px"><span>7340</span></div><div class="c" style="left:141px"><span>472</span></div><div class="c" style="left:241px"><span>3</span></div><div class="c" style="left:341px"><span>0</span></div><div class="c" style="left:441px"><span>0</span></div><div class="c" style="left:541px"><span>0</span></div><div class="c" style="left:641px"><span>3</span></div><div class="c" style="left:741px"><span>0</span></div><div class="c" style="left:841px"><span>1</span></div><div class="c" style="left:941px"><span>0</span></div><div class="c" style="left:1041px"><span>71</span></div><div class="c" style="left:1141px"><span>182</span></div><div class="c" style="left:1241px"><span>1</span></div><div class="c" style="left:1341px"><span>0</span></div><div class="c" style="left:1441px"><span>0</span></div></div><div class="row" style="top:396px"><div class="rh"></div><div class="c" style="left:41px"><span>7339</span></div><div class="c" style="left:141px"><span>111054</span></div><div class="c" style="left:241px"><span>2</span></div><div class="c" style="left:341px"><span>0</span></div><div class="c" style="left:441px"><span>0</span></div><div class="c" style="left:541px"><span>0</span></div><div class="c" style="left:641px"><span>0</span></div><div class="c" style="left:741px"><span>0</span></div><div class="c" style="left:841px"><span>0</span></div><div class="c" style="left:941px"><span>220</span></div><div class="c" style="left:1041px"><span>220</span></div><div class="c" style="left:1141px"><span>220</span></div><div class="c" style="left:1241px"><span>0</span></div><div class="c" style="left:1341px"><span>0</span></div><div class="c" style="left:1441px"><span>0</span></div></div><div class="row" style="top:418px"><div class="rh"></div><div class="c" style="left:41px"><span>7338</span></div><div class="c" style="left:141px"><span>111054</span></div><div class="c" style="left:241px"><span>1</span></div><div class="c" style="left:341px"><span>0</span></div><div class="c" style="left:441px"><span>0</span></div><div class="c" style="left:541px"><span>0</span></div><div class="c" style="left:641px"><span>0</span></div><div class="c" style="left:741px"><span>0</span></div><div class="c" style="left:841px"><span>0</span></div><div class="c" style="left:941px"><span>166</span></div><div class="c" style="left:1041px"><span>0</span></div><div class="c" style="left:1141px"><span>5</span></div><div class="c" style="left:1241px"><span>0</span></div><div class="c" style="left:1341px"><span>0</span></div><div class="c" style="left:1441px"><span>0</span></div></div><div class="row" style="top:440px"><div class="rh"></div><div class="c" style="left:41px"><span>7337</span></div><div class="c" style="left:141px"><span>111054</span></div><div class="c" style="left:241px"><span>0</span></div><div class="c" style="left:341px"><span>0</span></div><div class="c" style="left:441px"><span>0</span></div><div class="c" style="left:541px"><span>0</span></div><div class="c" style="left:641px"><span>8</span></div><div class="c" style="left:741px"><span>0</span></div><div class="c" style="left:841px"><span>0</span></div><div class="c" style="left:941px"><span>220</span></div><div class="c" style="left:1041px"><span>220</span></div><div class="c" style="left:1141px"><span>220</span></div><div class="c" style="left:1241px"><span>0</span></div><div class="c" style="left:1341px"><span>0</span></div><div class="c" style="left:1441px"><span>0</span></div></div><div class="row" style="top:462px"><div class="rh"></div><div class="c" style="left:41px"><span>7332</span></div><div class="c" style="left:141px"><span>7202</span></div><div class="c" style="left:241px"><span>3</span></div><div class="c" style="left:341px"><span>0</span></div><div class="c" style="left:441px"><span>0</span></div><div class="c" style="left:541px"><span>0</span></div><div class="c" style="left:641px"><span>7</span></div><div class="c" style="left:741px"><span>0</span></div><div class="c" style="left:841px"><span>1</span></div><div class="c" style="left:941px"><span>12</span></div><div class="c" style="left:1041px"><span>12</span></div><div class="c" style="left:1141px"><span>12</span></div><div class="c" style="left:1241px"><span>33</span></div><div class="c" style="left:1341px"><span>0</span></div><div class="c" style="left:1441px"><span>0</span></div></div><div class="row" style="top:484px"><div class="rh"></div><div class="c" style="left:41px"><span>7331</span></div><div class="c" style="left:141px"><span>111976</span></div><div class="c" style="left:241px"><span>2</span></div><div class="c" style="left:341px"><span>0</span></div><div class="c" style="left:441px"><span>0</span></div><div class="c" style="left:541px"><span>0</span></div><div class="c" style="left:641px"><span>0</span></div><div class="c" style="left:741px"><span>0</span></div><div class="c" style="left:841px"><span>0</span></div><div class="c" style="left:941px"><span>1</span></div><div class="c" style="left:1041px"><span>20</span></div><div class="c" style="left:1141px"><span>82</span></div><div class="c" style="left:1241px"><span>0</span></div><div class="c" style="left:1341px"><span>0</span></div><div class="c" style="left:1441px"><span>0</span></div></div><div class="row" style="top:506px"><div class="rh"></div><div class="c" style="left:41px"><span>7328</span></div><div class="c" style="left:141px"><span>1387</span></div><div class="c" style="left:241px"><span>0</span></div><div class="c" style="left:341px"><span>0</span></div><div class="c" style="left:441px"><span>0</span></div><div class="c" style="left:541px"><span>0</span></div><div class="c" style="left:641px"><span>9</span></div><div class="c" style="left:741px"><span>0</span></div><div class="c" style="left:841px"><span>1</span></div><div class="c" style="left:941px"><span>1</span></div><div class="c" style="left:1041px"><span>20</span></div><div class="c" style="left:1141px"><span>82</span></div><div class="c" style="left:1241px"><span>1</span></div><div class="c" style="left:1341px"><span>0</span></div><div class="c" style="left:1441px"><span>1</span></div></div><div class="row" style="top:528px"><div class="rh"></div><div class="c" style="left:41px"><span>7327</span></div><div class="c" style="left:141px"><span>112393</span></div><div class="c" style="left:241px"><span>3</span></div><div class="c" style="left:341px"><span>0</span></div><div class="c" style="left:441px"><span>0</span></div><div class="c" style="left:541px"><span>0</span></div><div class="c" style="left:641px"><span>17</span></div><div class="c" style="left:741px"><span>0</span></div><div class="c" style="left:841px"><span>1</span></div><div class="c" style="left:941px"><span>0</span></div><div class="c" style="left:1041px"><span>0</span></div><div class="c" style="left:1141px"><span>0</span></div><div class="c" style="left:1241px"><span>26</span></div><div class="c" style="left:1341px"><span>0</span></div><div class="c" style="left:1441px"><span>0</span></div></div><div class="row" style="top:550px"><div class="rh"></div><div class="c" style="left:41px"><span>7326</span></div><div class="c" style="left:141px"><span>1790</span></div><div class="c" style="left:241px"><span>3</span></div><div class="c" style="left:341px"><span>0</span></div><div class="c" style="left:441px"><span>0</span></div><div class="c" style="left:541px"><span>0</span></div><div class="c" style="left:641px"><span>19</span></div><div class="c" style="left:741px"><span>0</span></div><div class="c" style="left:841px"><span>1</span></div><div class="c" style="left:941px"><span>220</span></div><div class="c" style="left:1041px"><span>220</span></div><div class="c" style="left:1141px"><span>220</span></div><div class="c" style="left:1241px"><span>12</span></div><div class="c" style="left:1341px"><span>1</span></div><div class="c" style="left:1441px"><span>0</span></div></div><div class="row" style="top:572px"><div class="rh"></div><div class="c" style="left:41px"><span>7325</span></div><div class="c" style="left:141px"><span>243</span></div><div class="c" style="left:241px"><span>0</span></div><div class="c" style="left:341px"><span>0</span></div><div class="c" style="left:441px"><span>0</span></div><div class="c" style="left:541px"><span>0</span></div><div class="c" style="left:641px"><span>8</span></div><div class="c" style="left:741px"><span>0</span></div><div class="c" style="left:841px"><span>1</span></div><div class="c" style="left:941px"><span>255</span></div><div class="c" style="left:1041px"><span>255</span></div><div class="c" style="left:1141px"><span>255</span></div><div class="c" style="left:1241px"><span>0</span></div><div class="c" style="left:1341px"><span>0</span></div><div class="c" style="left:1441px"><span>0</span></div></div><div class="row" style="top:594px"><div class="rh"></div><div class="c" style="left:41px"><span>7324</span></div><div class="c" style="left:141px"><span>111674</span></div><div class="c" style="left:241px"><span>3</span></div><div class="c" style="left:341px"><span>0</span></div><div class="c" style="left:441px"><span>0</span></div><div class="c" style="left:541px"><span>0</span></div><div class="c" style="left:641px"><span>20</span></div><div class="c" style="left:741px"><span>0</span></div><div class="c" style="left:841px"><span>1</span></div><div class="c" style="left:941px"><span>220</span></div><div class="c" style="left:1041px"><span>220</span></div><div class="c" style="left:1141px"><span>220</span></div><div class="c" style="left:1241px"><span>26</span></div><div class="c" style="left:1341px"><span>0</span></div><div class="c" style="left:1441px"><span>0</span></div></div><div class="row" style="top:616px"><div class="rh"></div><div class="c" style="left:41px"><span>7323</span></div><div class="c" style="left:141px"><span>110701</span></div><div class="c" style="left:241px"><span>2</span></div><div class="c" style="left:341px"><span>0</span></div><div class="c" style="left:441px"><span>0</span></div><div class="c" style="left:541px"><span>0</span></div><div class="c" style="left:641px"><span>0</span></div><div class="c" style="left:741px"><span>0</span></div><div class="c" style="left:841px"><span>1</span></div><div class="c" style="left:941px"><span>12</span></div><div class="c" style="left:1041px"><span>12</span></div><div class="c" style="left:1141px"><span>12</span></div><div class="c" style="left:1241px"><span>42</span></div><div class="c" style="left:1341px"><span>0</span></div><div class="c" style="left:1441px"><span>0</span></div></div><div class="row" style="top:638px"><div class="rh"></div><div class="c" style="left:41px"><span>7322</span></div><div class="c" style="left:141px"><span>110701</span></div><div class="c" style="left:241px"><span>1</span></div><div class="c" style="left:341px"><span>0</span></div><div class="c" style="left:441px"><span>0</span></div><div class="c" style="left:541px"><span>0</span></div><div class="c" style="left:641px"><span>0</span></div><div class="c" style="left:741px"><span>0</span></div><div class="c" style="left:841px"><span>1</span></div><div class="c" style="left:941px"><span>220</span></div><div class="c" style="left:1041px"><span>220</span></div><div class="c" style="left:1141px"><span>220</span></div><div class="c" style="left:1241px"><span>42</span></div><div class="c" style="left:1341px"><span>0</span></div><div class="c" style="left:1441px"><span>0</span></div></div><div class="row" style="top:660px"><div class="rh"></div><div class="c" style="left:41px"><span>7321</span></div><div class="c" style="left:141px"><span>110701</span></div><div class="c" style="left:241px"><span>0</span></div><div class="c" style="left:341px"><span>0</span></div><div class="c" style="left:441px"><span>0</span></div><div class="c" style="left:541px"><span>0</span></div><div class="c" style="left:641px"><span>18</span></div><div class="c" style="left:741px"><span>0</span></div><div class="c" style="left:841px"><span>1</span></div><div class="c" style="left:941px"><span>12</span></div><div class="c" style="left:1041px"><span>12</span></div><div class="c" style="left:1141px"><span>12</span></div><div class="c" style="left:1241px"><span>42</span></div><div class="c" style="left:1341px"><span>0</span></div><div class="c" style="left:1441px"><span>0</span></div></div><div class="row" style="top:682px"><div class="rh"></div><div class="c" style="left:41px"><span>7320</span></div><div class="c" style="left:141px"><span>110827</span></div><div class="c" style="left:241px"><span>2</span></div><div class="c" style="left:341px"><span>0</span></div><div class="c" style="left:441px"><span>0</span></div><div class="c" style="left:541px"><span>0</span></div><div class="c" style="left:641px"><span>19</span></div><div class="c" style="left:741px"><span>0</span></div><div class="c" style="left:841px"><span>1</span></div><div class="c" style="left:941px"><span>220</span></div><div class="c" style="left:1041px"><span>220</span></div><div class="c" style="left:1141px"><span>220</span></div><div class="c" style="left:1241px"><span>0</span></div><div class="c" style="left:1341px"><span>0</span></div><div class="c" style="left:1441px"><span>0</span></div></div><div class="row" style="top:704px"><div class="rh"></div><div class="c" style="left:41px"><span>7319</span></div><div class="c" style="left:141px"><span>110827</span></div><div class="c" style="left:241px"><span>1</span></div><div class="c" style="left:341px"><span>0</span></div><div class="c" style="left:441px"><span>0</span></div><div class="c" style="left:541px"><span>0</span></div><div class="c" style="left:641px"><span>19</span></div><div class="c" style="left:741px"><span>0</span></div><div class="c" style="left:841px"><span>1</span></div><div class="c" style="left:941px"><span>220</span></div><div class="c" style="left:1041px"><span>220</span></div><div class="c" style="left:1141px"><span>220</span></div><div class="c" style="left:1241px"><span>0</span></div><div class="c" style="left:1341px"><span>0</span></div><div class="c" style="left:1441px"><span>0</span></div></div><div class="row" style="top:726px"><div class="rh"></div><div class="c" style="left:41px"><span>7318</span></div><div class="c" style="left:141px"><span>110827</span></div><div class="c" style="left:241px"><span>0</span></div><div class="c" style="left:341px"><span>0</span></div><div class="c" style="left:441px"><span>0</span></div><div class="c" style="left:541px"><span>0</span></div><div class="c" style="left:641px"><span>7</span></div><div class="c" style="left:741px"><span>0</span></div><div class="c" style="left:841px"><span>1</span></div><div class="c" style="left:941px"><span>220</span></div><div class="c" style="left:1041px"><span>220</span></div><div class="c" style="left:1141px"><span>220</span></div><div class="c" style="left:1241px"><span>0</span></div><div class="c" style="left:1341px"><span>0</span></div><div class="c" style="left:1441px"><span>0</span></div></div><div class="row" style="top:748px"><div class="rh"></div><div class="c" style="left:41px"><span>7317</span></div><div class="c" style="left:141px"><span>112139</span></div><div class="c" style="left:241px"><span>3</span></div><div class="c" style="left:341px"><span>0</span></div><div class="c" style="left:441px"><span>0</span></div><div class="c" style="left:541px"><span>0</span></div><div class="c" style="left:641px"><span>13</span></div><div class="c" style="left:741px"><span>0</span></div><div class="c" style="left:841px"><span>1</span></div><div class="c" style="left:941px"><span>240</span></div><div class="c" style="left:1041px"><span>218</span></div><div class="c" style="left:1141px"><span>40</span></div><div class="c" style="left:1241px"><span>26</span></div><div class="c" style="left:1341px"><span>0</span></div><div class="c" style="left:1441px"><span>0</span></div></div><div class="row" style="top:770px"><div class="rh"></div><div class="c" style="left:41px"><span>7316</span></div><div class="c" style="left:141px"><span>9</span></div><div class="c" style="left:241px"><span>0</span></div><div class="c" style="left:341px"><span>0</span></div><div class="c" style="left:441px"><span>0</span></div><div class="c" style="left:541px"><span>0</span></div><div class="c" style="left:641px"><span>0</span></div><div class="c" style="left:741px"><span>0</span></div><div class="c" style="left:841px"><span>0</span></div><div class="c" style="left:941px"><span>0</span></div><div class="c" style="left:1041px"><span>0</span></div><div class="c" style="left:1141px"><span>0</span></div><div class="c" style="left:1241px"><span>0</span></div><div class="c" style="left:1341px"><span>0</span></div><div class="c" style="left:1441px"><span>0</span></div></div><div class="row" style="top:792px"><div class="rh"></div><div class="c" style="left:41px"><span>7315</span></div><div class="c" style="left:141px"><span>1413</span></div><div class="c" style="left:241px"><span>2</span></div><div class="c" style="left:341px"><span>0</span></div><div class="c" style="left:441px"><span>0</span></div><div class="c" style="left:541px"><span>0</span></div><div class="c" style="left:641px"><span>0</span></div><div class="c" style="left:741px"><span>0</span></div><div class="c" style="left:841px"><span>1</span></div><div class="c" style="left:941px"><span>220</span></div><div class="c" style="left:1041px"><span>220</span></div><div class="c" style="left:1141px"><span>220</span></div><div class="c" style="left:1241px"><span>1</span></div><div class="c" style="left:1341px"><span>0</span></div><div class="c" style="left:1441px"><span>1</span></div></div><div class="row" style="top:814px"><div class="rh"></div><div class="c" style="left:41px"><span>7314</span></div><div class="c" style="left:141px"><span>1413</span></div><div class="c" style="left:241px"><span>1</span></div><div class="c" style="left:341px"><span>0</span></div><div class="c" style="left:441px"><span>0</span></div><div class="c" style="left:541px"><span>0</span></div><div class="c" style="left:641px"><span>0</span></div><div class="c" style="left:741px"><span>0</span></div><div class="c" style="left:841px"><span>1</span></div><div class="c" style="left:941px"><span>166</span></div><div class="c" style="left:1041px"><span>0</span></div><div class="c" style="left:1141px"><span>5</span></div><div class="c" style="left:1241px"><span>1</span></div><div class="c" style="left:1341px"><span>0</span></div><div class="c" style="left:1441px"><span>1</span></div></div><div class="row" style="top:836px"><div class="rh"></div><div class="c" style="left:41px"><span>7313</span></div><div class="c" style="left:141px"><span>1413</span></div><div class="c" style="left:241px"><span>0</span></div><div class="c" style="left:341px"><span>0</span></div><div class="c" style="left:441px"><span>0</span></div><div class="c" style="left:541px"><span>0</span></div><div class="c" style="left:641px"><span>0</span></div><div class="c" style="left:741px"><span>0</span></div><div class="c" style="left:841px"><span>1</span></div><div class="c" style="left:941px"><span>220</span></div><div class="c" style="left:1041px"><span>220</span></div><div class="c" style="left:1141px"><span>220</span></div><div class="c" style="left:1241px"><span>1</span></div><div class="c" style="left:1341px"><span>0</span></div><div class="c" style="left:1441px"><span>1</span></div></div><div class="row" style="top:858px"><div class="rh"></div><div class="c" style="left:41px"><span>7312</span></div><div class="c" style="left:141px"><span>112958</span></div><div class="c" style="left:241px"><span>2</span></div><div class="c" style="left:341px"><span>0</span></div><div class="c" style="left:441px"><span>0</span></div><div class="c" style="left:541px"><span>0</span></div><div class="c" style="left:641px"><span>0</span></div><div class="c" style="left:741px"><span>0</span></div><div class="c" style="left:841px"><span>1</span></div><div class="c" style="left:941px"><span>12</span></div><div class="c" style="left:1041px"><span>12</span></div><div class="c" style="left:1141px"><span>12</span></div><div class="c" style="left:1241px"><span>0</span></div><div class="c" style="left:1341px"><span>0</span></div><div class="c" style="left:1441px"><span>0</span></div></div><div class="row" style="top:880px"><div class="rh"></div><div class="c" style="left:41px"><span>7311</span></div><div class="c" style="left:141px"><span>112958</span></div><div class="c" style="left:241px"><span>1</span></div><div class="c" style="left:341px"><span>0</span></div><div class="c" style="left:441px"><span>0</span></div><div class="c" style="left:541px"><span>0</span></div><div class="c" style="left:641px"><span>0</span></div><div class="c" style="left:741px"><span>0</span></div><div class="c" style="left:841px"><span>1</span></div><div class="c" style="left:941px"><span>127</span></div><div class="c" style="left:1041px"><span>25</span></div><div class="c" style="left:1141px"><span>190</span></div><div class="c" style="left:1241px"><span>0</span></div><div class="c" style="left:1341px"><span>0</span></div><div class="c" style="left:1441px"><span>0</span></div></div></div><div id="gvsb"><div class="arr up"></div><div class="thumb"></div><div class="arr dn"></div></div><div id="ghsb"><div class="arr lf"></div><div class="thumb"><i></i></div><div class="arr rt"></div></div><div id="gcorner"></div></div>
<div class="anno" style="left:398px;top:81px;width:109px;height:37px"></div><div class="anno" style="left:0px;top:314px;width:190px;height:26px"></div>
<div id="status"><div id="prog"></div><span>Ready</span><svg id="orb" width="30" height="8" viewBox="0 0 30 8"><path d="M1 8a14 14 0 0 1 28 0" fill="#dbe7f8" stroke="#5a7cb8" stroke-width="1"/></svg></div>
<svg id="gadget" width="64" height="38" viewBox="0 0 64 38"><path d="M10 32.700A25 25 0 0 1 60 32.700V33.500Q60 35 58.500 35H11.500Q10 35 10 33.500Z" fill="#08307c" stroke="#2c66e0" stroke-width="2"/><path d="M7 28.100A32.200 32.200 0 0 1 60.400 13.600" fill="none" stroke="#1fdc1f" stroke-width="2.600" stroke-dasharray="5.400 1.800"/><rect x="2" y="28" width="4" height="8" fill="#f06018"/><rect x="6" y="29" width="2" height="7" fill="#22d822"/><path d="M27 20.500a4.600 4.600 0 0 1 9.200 0z" fill="#2f6fe8"/><rect x="34" y="13" width="2" height="2" fill="#2f6fe8"/><rect x="38" y="13" width="2" height="2" fill="#2f6fe8"/><rect x="24" y="14" width="2" height="2" fill="#2458c0"/><path d="M14 23h8v2l-1.500 2 1.500 2v2h-8q-1.500-4 0-8z" fill="#c86a3c"/><path d="M16 25h4M16 27h4M16 29h4" stroke="#f08020" stroke-width="1"/><ellipse cx="34.500" cy="27" rx="1.400" ry="3.400" fill="#f08030"/><rect x="38" y="24" width="2" height="7" rx="1" fill="#22e022"/><rect x="41.500" y="23" width="4.500" height="8" rx="1" fill="#1ec81e"/><path d="M41 14h5v6h-4z" fill="#86e6a6"/><path d="M50 19h8v7h-8z" fill="#7aeaa0"/><rect x="50.500" y="26" width="7.500" height="5" fill="#34c05c"/><path d="M12 33.500h46" stroke="#2c66e0" stroke-width="2"/></svg>
</body></html>
